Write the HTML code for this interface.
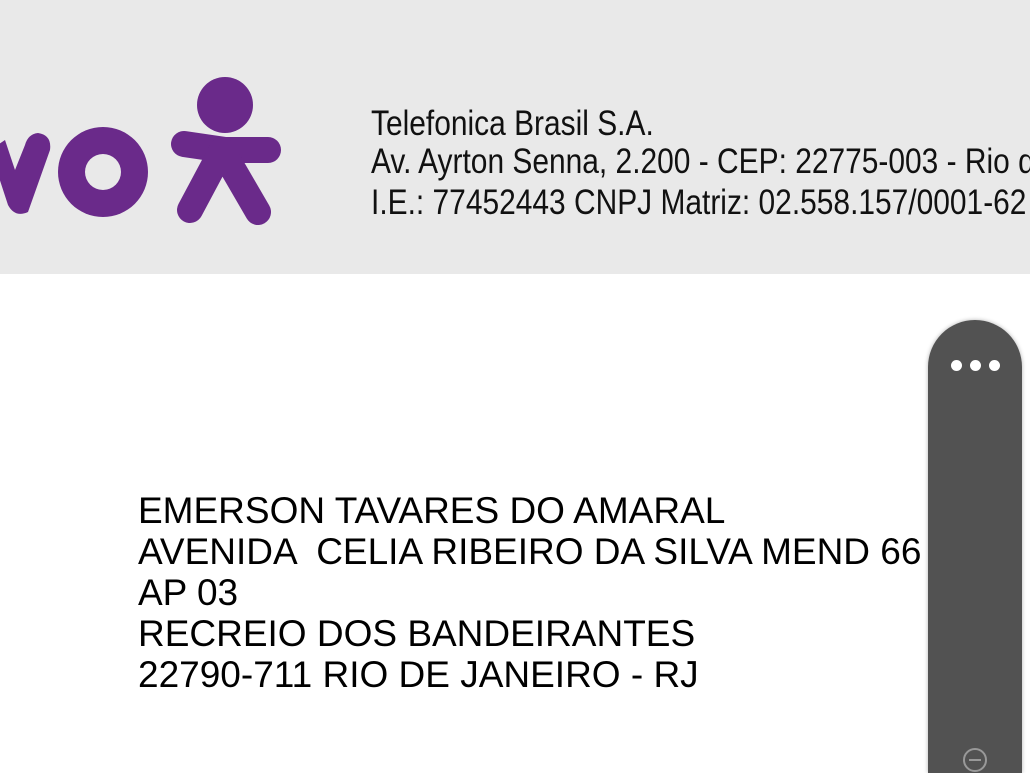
<!DOCTYPE html>
<html><head><meta charset="utf-8"><style>
html,body{margin:0;width:1030px;height:773px;overflow:hidden}
body{background:#fff;position:relative;font-family:"Liberation Sans",sans-serif}
.hdr{position:absolute;left:0;top:0;width:1030px;height:274px;background:#e9e9e9;overflow:hidden}
.ht{position:absolute;left:371px;font-size:35px;color:#111;white-space:nowrap;transform:scaleX(0.855);transform-origin:left top;line-height:40px}
.addr{position:absolute;left:138px;top:490px;font-size:37px;line-height:41px;color:#000;white-space:pre}
.side{position:absolute;left:928px;top:320px;width:94px;height:453px;background:#525252;border-radius:47px 47px 0 0;box-shadow:0 0 4px rgba(0,0,0,.3)}
.dot{position:absolute;top:40px;width:11px;height:11px;border-radius:50%;background:#fff}
</style></head><body>
<div class="hdr">
<svg width="300" height="274" style="position:absolute;left:0;top:0">
<g fill="#6a2a8a" stroke="none">
<path d="M-10 150 L8 205 Q15 218 28 212 L50 150 Q52 135 38 133 Q28 134 25 145 L15 170 L5 140 Z"/>
<circle cx="103" cy="172" r="45"/>
<circle cx="225" cy="105" r="28"/>
</g>
<circle cx="103" cy="172" r="18" fill="#e9e9e9"/>
<g stroke="#6a2a8a" stroke-linecap="round" stroke-linejoin="round" fill="none">
<path d="M184 144 L225 150 L268 150" stroke-width="26"/>
<path d="M222 150 L190 210 M222 150 L258 212" stroke-width="26"/>
</g>
</svg>
<div class="ht" style="top:104px">Telefonica Brasil S.A.</div>
<div class="ht" style="top:142px">Av. Ayrton Senna, 2.200 - CEP: 22775-003 - Rio de Janeiro</div>
<div class="ht" style="top:183px">I.E.: 77452443 CNPJ Matriz: 02.558.157/0001-62</div>
</div>
<div class="addr">EMERSON TAVARES DO AMARAL
AVENIDA  CELIA RIBEIRO DA SILVA MEND 66
AP 03
RECREIO DOS BANDEIRANTES
22790-711 RIO DE JANEIRO - RJ</div>
<div class="side">
<div class="dot" style="left:23px"></div><div class="dot" style="left:42px"></div><div class="dot" style="left:61px"></div>
<svg width="30" height="30" style="position:absolute;left:32px;top:425px"><circle cx="15" cy="15" r="11" fill="none" stroke="#999" stroke-width="2"/><line x1="9" y1="15" x2="21" y2="15" stroke="#999" stroke-width="2"/></svg>
</div>
</body></html>
